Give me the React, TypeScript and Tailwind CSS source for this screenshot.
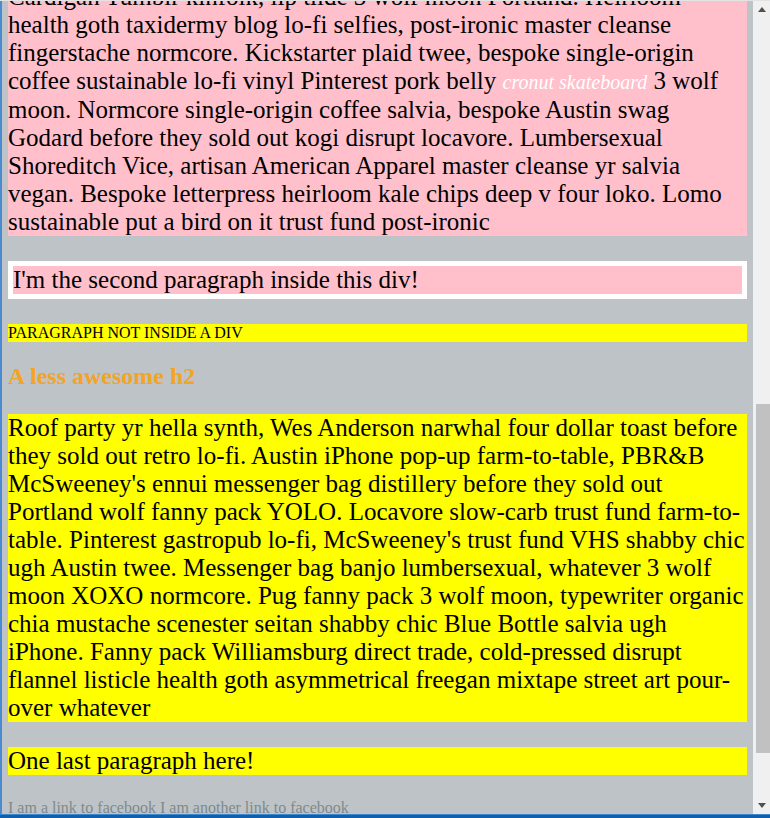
import React from 'react';

const pinkLines = [
  'Cardigan Tumblr kinfolk, lip tilde 3 wolf moon Portland. Heirloom',
  'health goth taxidermy blog lo-fi selfies, post-ironic master cleanse',
  'fingerstache normcore. Kickstarter plaid twee, bespoke single-origin',
  'COFFEE_LINE',
  'moon. Normcore single-origin coffee salvia, bespoke Austin swag',
  'Godard before they sold out kogi disrupt locavore. Lumbersexual',
  'Shoreditch Vice, artisan American Apparel master cleanse yr salvia',
  'vegan. Bespoke letterpress heirloom kale chips deep v four loko. Lomo',
  'sustainable put a bird on it trust fund post-ironic',
];

const yellowLines = [
  'Roof party yr hella synth, Wes Anderson narwhal four dollar toast before',
  'they sold out retro lo-fi. Austin iPhone pop-up farm-to-table, PBR&B',
  "McSweeney's ennui messenger bag distillery before they sold out",
  'Portland wolf fanny pack YOLO. Locavore slow-carb trust fund farm-to-',
  "table. Pinterest gastropub lo-fi, McSweeney's trust fund VHS shabby chic",
  'ugh Austin twee. Messenger bag banjo lumbersexual, whatever 3 wolf',
  'moon XOXO normcore. Pug fanny pack 3 wolf moon, typewriter organic',
  'chia mustache scenester seitan shabby chic Blue Bottle salvia ugh',
  'iPhone. Fanny pack Williamsburg direct trade, cold-pressed disrupt',
  'flannel listicle health goth asymmetrical freegan mixtape street art pour-',
  'over whatever',
];

const Scrollbar: React.FC = () => (
  <div className="w-[17px] bg-[#f0f0f0] flex flex-col">
    <div className="h-[17px] flex items-center justify-center">
      <svg width="8" height="5" viewBox="0 0 8 5">
        <path d="M0 5 L4 0 L8 5 Z" fill="#505050" />
      </svg>
    </div>
    <div className="flex-1 flex flex-col">
      <div className="h-[386px]" />
      <div className="h-[349px] ml-[3px] bg-[#c1c1c1]" />
    </div>
    <div className="h-[17px] flex items-center justify-center">
      <svg width="8" height="5" viewBox="0 0 8 5">
        <path d="M0 0 L4 5 L8 0 Z" fill="#505050" />
      </svg>
    </div>
  </div>
);

export default function App() {
  return (
    <div className="w-[770px] h-[818px] flex flex-col overflow-hidden font-['Liberation_Serif',serif] text-black">
      <div className="h-px bg-[#e3e3e3]" />
      <div className="flex flex-1 min-h-0">
        <div className="w-[2px] bg-[#4a8ad0]" />
        <main className="flex-1 bg-[#bdc3c7] overflow-hidden px-[6px]">
          <div className="-mt-[18px]">
            <p className="bg-[#ffc0cb] text-[25px] leading-[28px] whitespace-nowrap">
              {pinkLines.map((line, i) => (
                <React.Fragment key={i}>
                  {line === 'COFFEE_LINE' ? (
                    <>
                      coffee sustainable lo-fi vinyl Pinterest pork belly{' '}
                      <small className="text-[20px] italic text-white">cronut skateboard</small> 3 wolf
                    </>
                  ) : (
                    line
                  )}
                  {i < pinkLines.length - 1 && <br />}
                </React.Fragment>
              ))}
            </p>

            <div className="mt-[25px] bg-white p-[5px]">
              <p className="bg-[#ffc0cb] text-[25px] leading-[28px]">
                I'm the second paragraph inside this div!
              </p>
            </div>

            <p className="mt-[25px] bg-[#ffff00] text-[16px] leading-[18px] uppercase">
              Paragraph not inside a div
            </p>

            <h2 className="mt-[20px] text-[24px] leading-[28px] font-bold text-[#f4a425]">
              A less awesome h2
            </h2>

            <p className="mt-[24px] bg-[#ffff00] text-[25px] leading-[28px] whitespace-nowrap">
              {yellowLines.map((line, i) => (
                <React.Fragment key={i}>
                  {line}
                  {i < yellowLines.length - 1 && <br />}
                </React.Fragment>
              ))}
            </p>

            <p className="mt-[25px] bg-[#ffff00] text-[25px] leading-[28px]">
              One last paragraph here!
            </p>

            <div className="mt-[24px] text-[16px] leading-[18px] text-[#808a8c]">
              <a href="#">I am a link to facebook</a> <a href="#">I am another link to facebook</a>
            </div>
          </div>
        </main>
        <Scrollbar />
      </div>
      <div className="h-[4px] bg-[#0f5fae] border-t border-[#3b89d3]" />
    </div>
  );
}
